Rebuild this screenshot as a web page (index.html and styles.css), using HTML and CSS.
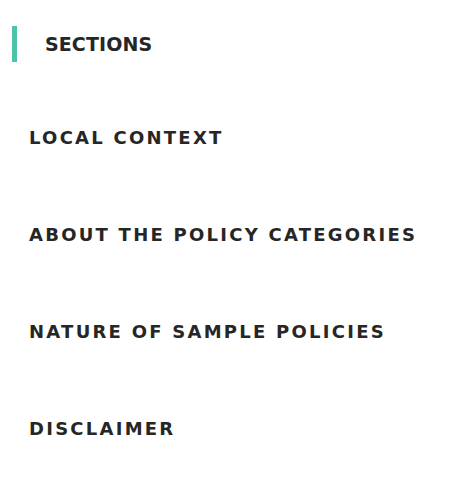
FILE: index.html
```html
<!DOCTYPE html>
<html>
<head>
<meta charset="utf-8">
<link rel="stylesheet" href="styles.css">
</head>
<body>
<nav class="sections">
  <div class="sections-head">
    <span class="bar"></span>
    <span class="head-text">SECTIONS</span>
  </div>
  <ul class="list">
    <li class="item">LOCAL CONTEXT</li>
    <li class="item">ABOUT THE POLICY CATEGORIES</li>
    <li class="item">NATURE OF SAMPLE POLICIES</li>
    <li class="item">DISCLAIMER</li>
  </ul>
</nav>
</body>
</html>
```
FILE: styles.css
```css
html, body {
  margin: 0;
  padding: 0;
  background: #fff;
}
.sections {
  padding: 26px 0 0 12px;
  font-family: "DejaVu Sans", "Liberation Sans", sans-serif;
  color: #262626;
}
.sections-head {
  display: flex;
  align-items: center;
  height: 36px;
}
.bar {
  width: 5px;
  height: 36px;
  background: #4dc3a9;
}
.head-text {
  margin-left: 28px;
  font-size: 19px;
  font-weight: 700;
  letter-spacing: 0.1px;
}
.list {
  list-style: none;
  margin: 0;
  padding: 0 0 0 17px;
}
.item {
  height: 97px;
  display: flex;
  align-items: center;
  font-size: 18px;
  font-weight: 700;
  letter-spacing: 2.25px;
}
.item:first-child {
  margin-top: 27px;
}
```
